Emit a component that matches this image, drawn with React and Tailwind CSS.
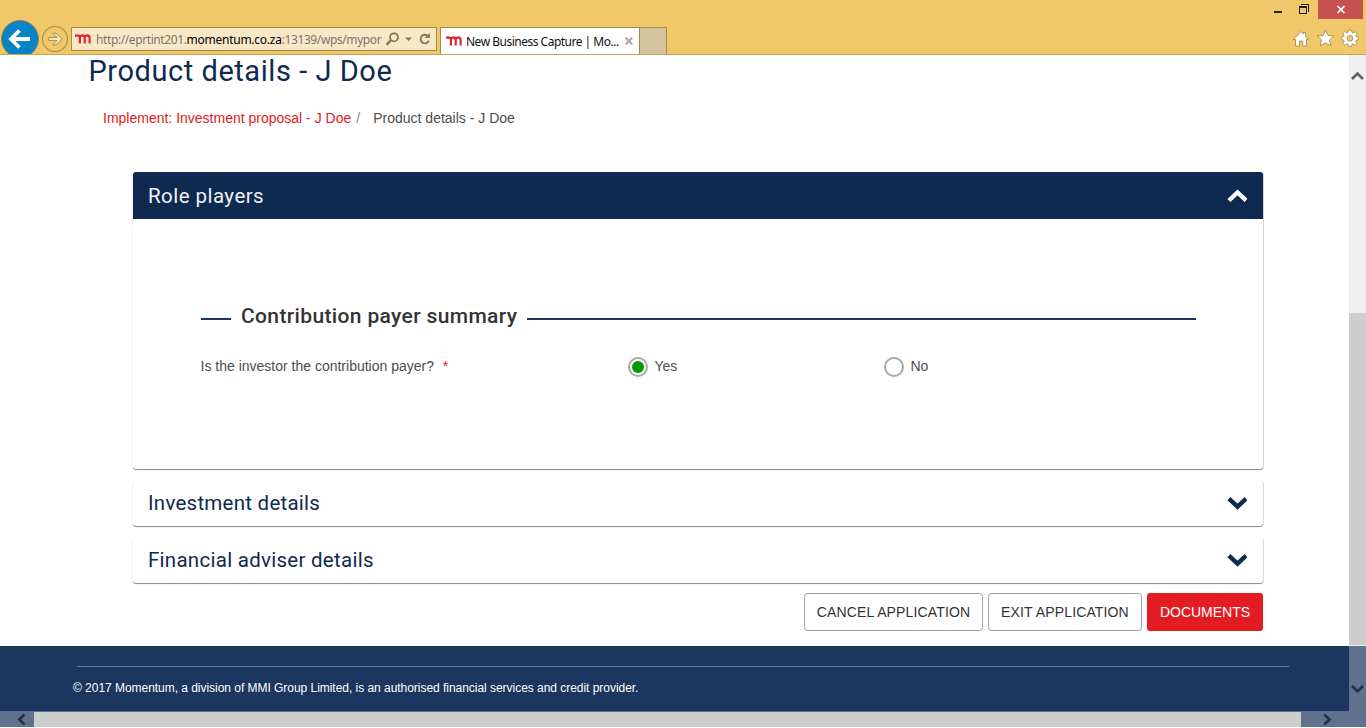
import React from "react";

function Logo() {
  return (
    <svg className="h-[11px] w-4 shrink-0" viewBox="0 0 16 11" fill="none" stroke="#df1f2a" strokeWidth="2.1">
      <path d="M0 1.6H3.2Q4.9 1.6 4.9 4V9.5M4.9 3.4Q5.6 1.4 7.4 1.4Q9.7 1.4 9.7 4V9.5M9.7 3.4Q10.4 1.4 12.2 1.4Q14.6 1.4 14.6 4V9.5" />
    </svg>
  );
}

function Chevron({ up }) {
  return (
    <svg className="h-[14px] w-5 shrink-0" viewBox="0 0 20 14" fill="none" stroke="currentColor" strokeWidth="4.4">
      <path d={up ? "M1.9 11.5L10.5 3.5L19.1 11.5" : "M1.9 1.7L10.5 9.7L19.1 1.7"} strokeLinejoin="miter" />
    </svg>
  );
}

function BrowserBar() {
  return (
    <header className="flex h-[55px] shrink-0 flex-col overflow-hidden border-b border-[#c9a558] bg-[#f0c869]">
      <div className="flex h-[19px] shrink-0 justify-end pr-[3px]">
        <svg className="h-[19px] w-[48px]" viewBox="0 0 48 19" fill="none" stroke="#222" shapeRendering="crispEdges">
          <path d="M4 12H12" strokeWidth="2" />
          <path d="M29 6.5H37M29.5 6V13.5H36.5V6" />
          <path d="M29 7H37" strokeWidth="2" />
          <path d="M31 4.5H38.5V12" />
        </svg>
        <div className="flex w-[45px] items-center justify-center bg-[#c75050]">
          <svg className="h-[9px] w-[9px]" viewBox="0 0 9 9" stroke="white" strokeWidth="1.7">
            <path d="M1.5 1L8.5 8M8.5 1L1.5 8" />
          </svg>
        </div>
      </div>
      <div className="flex h-[35px] items-start">
        <svg className="h-[35px] w-[71px] shrink-0" viewBox="0 0 71 35" fill="none">
          <circle cx="20" cy="20" r="18.5" fill="#0684c5" stroke="#9c8140" strokeWidth="1" />
          <path d="M11 20H30M19.5 11.5L11 20L19.5 28.5" stroke="white" strokeWidth="3.8" />
          <circle cx="55" cy="20" r="12.5" stroke="#a88a46" strokeWidth="1.1" />
          <path d="M48.5 18.5H57L52.8 14.2H56.2L62.2 20L56.2 25.8H52.8L57 21.5H48.5Z" fill="#f9e6b8" stroke="#a58b50" strokeWidth="0.9" />
        </svg>
        <div className="mt-2 flex h-6 w-[366px] shrink-0 items-center border border-[#a48a49] bg-[#f9e8c6] pl-[3px]">
          <Logo />
          <div className="mt-[2px] ml-[5px] w-[289px] font-['Noto_Sans'] text-[12px] leading-5 tracking-[-0.4px] whitespace-nowrap text-[#7c7668]">
            http://eprtint201.<span className="tracking-[-0.25px] text-black">momentum.co.za</span>:13139/wps/mypor
          </div>
          <svg className="h-[20px] w-[48px] shrink-0" viewBox="0 0 48 20" fill="none" stroke="#817760">
            <circle cx="9" cy="8.3" r="4" strokeWidth="1.8" />
            <path d="M6.2 11L1.5 15.8" strokeWidth="2.4" />
            <path d="M20 8.5H27L23.5 12Z" fill="#817760" stroke="none" />
            <path d="M42.5 6.6A4.3 4.3 0 1 0 43.9 11.6" strokeWidth="1.9" />
            <path d="M44.8 4V9H39.8Z" fill="#817760" stroke="none" />
          </svg>
        </div>
        <div className="mt-2 ml-[3px] flex h-[27px] w-[200px] shrink-0 items-center border border-b-0 border-[#a48a49] bg-white pl-[5px]">
          <Logo />
          <span className="mt-px ml-[4px] w-[154px] shrink-0 font-['Noto_Sans'] text-[12px] leading-5 tracking-[-0.5px] whitespace-nowrap text-[#111]">New Business Capture | Mo...</span>
          <svg className="ml-[5px] h-2 w-2 shrink-0" viewBox="0 0 8 8" stroke="#a7a7a7" strokeWidth="2">
            <path d="M.7 .7L7.3 7.3M7.3 .7L.7 7.3" />
          </svg>
        </div>
        <div className="mt-2 h-[27px] w-[27px] border border-b-0 border-l-0 border-[#a48a49] bg-[#d5c59d]" />
        <svg className="mt-[10px] ml-auto h-5 w-[74px]" viewBox="0 0 74 20" fill="white" stroke="#9c8445" strokeWidth="0.8">
          <path d="M1.5 10.5L9 2.5L11.5 5V3.5H13.5V7L16.5 10.5H14.5V17H10.7V12H7.5V17H3.5V10.5Z" />
          <path d="M33.5 1L35.9 6.5L41.8 6.9L37.4 10.9L38.9 16.8L33.5 13.8L28.1 16.8L29.6 10.9L25.2 6.9L31.1 6.5Z" />
          <path fillRule="evenodd" d="M56.4 1.2H59.6L60 3.4L61.3 4L63.3 2.7L65.2 4.7L63.8 6.4L64.2 7.6H66.3V10.8L64.2 11.2L63.7 12.4L65.1 14.3L63 16.3L61 14.9L59.8 15.4V17.3H56.4L56 15.4L54.8 14.9L52.8 16.3L50.8 14.3L52.2 12.5L51.7 11.2L49.7 10.8V7.6L51.8 7.4L52.3 6.4L50.8 4.6L52.9 2.6L54.8 4L56 3.4ZM58 6.4A2.9 2.9 0 1 0 58 12.2A2.9 2.9 0 1 0 58 6.4Z" />
        </svg>
      </div>
    </header>
  );
}

function Panel({ title }) {
  return (
    <button className="flex h-[45px] w-full items-center justify-between rounded-[3px] pr-4 pl-[15px] font-[Roboto] text-[20.5px] text-[#0e2a50] shadow-[0_1px_1px_0px_#888,1px_0_0_0_#e2e2e2]">
      {title}
      <Chevron />
    </button>
  );
}

function Radio({ label, checked }) {
  return (
    <label className="flex h-[21px] items-end gap-[6px]">
      <span className="flex h-5 w-5 shrink-0 items-center justify-center rounded-full border-2 border-[#a9a9a9]">
        {checked && <span className="h-3 w-3 rounded-full bg-[#009a00]" />}
      </span>
      <span className="self-start pl-[0.5px]">{label}</span>
    </label>
  );
}

export default function App() {
  return (
    <div className="flex h-[728px] w-[1366px] flex-col overflow-hidden bg-white font-['Liberation_Sans',sans-serif] text-[#4d4d4d]">
      <BrowserBar />
      <div className="flex h-[656px] shrink-0">
        <div className="flex w-[1349px] flex-col">
          <main className="h-[591px]">
            <h1 className="h-[43px] pl-[88.5px] font-[Roboto] text-[29px] leading-[32px] tracking-[0.55px] text-[#0e2a50]">Product details - J Doe</h1>
            <nav className="mt-[10px] flex pl-[103px] text-[14px] leading-5">
              <a className="text-[#e01b22]">Implement: Investment proposal - J Doe</a>
              <span className="ml-[5px] w-[17px] text-[#888]">/</span>
              <span>Product details - J Doe</span>
            </nav>
            <div className="mt-[44px] ml-[133px] w-[1130px]">
              <section className="h-[297px] rounded-[3px] shadow-[0_1px_1px_0px_#888,1px_0_0_0_#dcdcdc]">
                <div className="flex h-[47px] items-center justify-between rounded-t-[3px] bg-[#0e2a50] pr-4 pl-[15px] font-[Roboto] text-[20.5px] tracking-[0.45px] text-[#eef1f5]">
                  <span className="mt-[2px]">Role players</span>
                  <span className="text-white"><Chevron up /></span>
                </div>
                <div className="px-[67px] pt-[82px]">
                  <div className="flex h-[30px] items-center gap-[10px] pl-px">
                    <div className="mt-[6px] h-[2px] w-[30px] bg-[#1b365f]" />
                    <h2 className="font-[Roboto] text-[21px] leading-[30px] font-medium tracking-[0.36px] whitespace-nowrap text-[#333]">Contribution payer summary</h2>
                    <div className="mt-[6px] h-[2px] grow bg-[#1b365f]" />
                  </div>
                  <div className="mt-[25px] grid grid-cols-[428px_256px_1fr] text-[14px] leading-5">
                    <span className="pl-[0.5px]">Is the investor the contribution payer? <span className="ml-[5px] text-[#e01b22]">*</span></span>
                    <Radio label="Yes" checked />
                    <Radio label="No" />
                  </div>
                </div>
              </section>
              <div className="mt-3 flex flex-col gap-3">
                <Panel title={<span className="tracking-[0.25px]">Investment details</span>} />
                <Panel title={<span className="tracking-[0.27px]">Financial adviser details</span>} />
              </div>
              <div className="mt-[10px] flex h-[38px] justify-end gap-[5px] text-[14px] tracking-[0.14px]">
                <button className="w-[179px] rounded-[3px] border border-[#a6a6a6] text-[#333]">CANCEL APPLICATION</button>
                <button className="w-[154px] rounded-[3px] border border-[#a6a6a6] text-[#333]">EXIT APPLICATION</button>
                <button className="w-[116px] rounded-[3px] bg-[#e31b23] tracking-normal text-white">DOCUMENTS</button>
              </div>
            </div>
          </main>
          <footer className="h-[65px] bg-[#1b365f] pt-5">
            <div className="ml-[77px] h-px w-[1212px] bg-[#64779a]" />
            <p className="mt-[13px] pl-[73px] text-[12px] leading-4 tracking-[-0.035px] text-white">© 2017 Momentum, a division of MMI Group Limited, is an authorised financial services and credit provider.</p>
          </footer>
        </div>
        <div className="flex w-[17px] flex-col bg-[#f0f0f0]">
          <svg className="mt-[15px] h-3 w-[17px]" viewBox="0 0 17 12" fill="none" stroke="#606060" strokeWidth="2.6"><path d="M3 9L8.5 3.5L14 9" /></svg>
          <div className="mt-[231px] h-[332px] bg-[#cdcdcd]" />
          <div className="mt-px h-[65px] bg-[#5f718d] pt-[37px]">
            <svg className="h-3 w-[17px]" viewBox="0 0 17 12" fill="none" stroke="#27303e" strokeWidth="2.6"><path d="M3 3L8.5 8.5L14 3" /></svg>
          </div>
        </div>
      </div>
      <div className="flex h-4 shrink-0 border-t border-[#5f718d] bg-[#cdcdcd]">
        <div className="w-[34px] bg-[#5f718d] pl-4">
          <svg className="h-[15px] w-3" viewBox="0 0 12 15" fill="none" stroke="#27303e" strokeWidth="2.6"><path d="M8.5 2.5L3.2 7.5L8.5 12.5" /></svg>
        </div>
        <div className="ml-auto w-[65px] bg-[#5f718d] pl-[20px]">
          <svg className="h-[15px] w-3" viewBox="0 0 12 15" fill="none" stroke="#27303e" strokeWidth="2.6"><path d="M3.2 2.5L8.5 7.5L3.2 12.5" /></svg>
        </div>
      </div>
    </div>
  );
}
